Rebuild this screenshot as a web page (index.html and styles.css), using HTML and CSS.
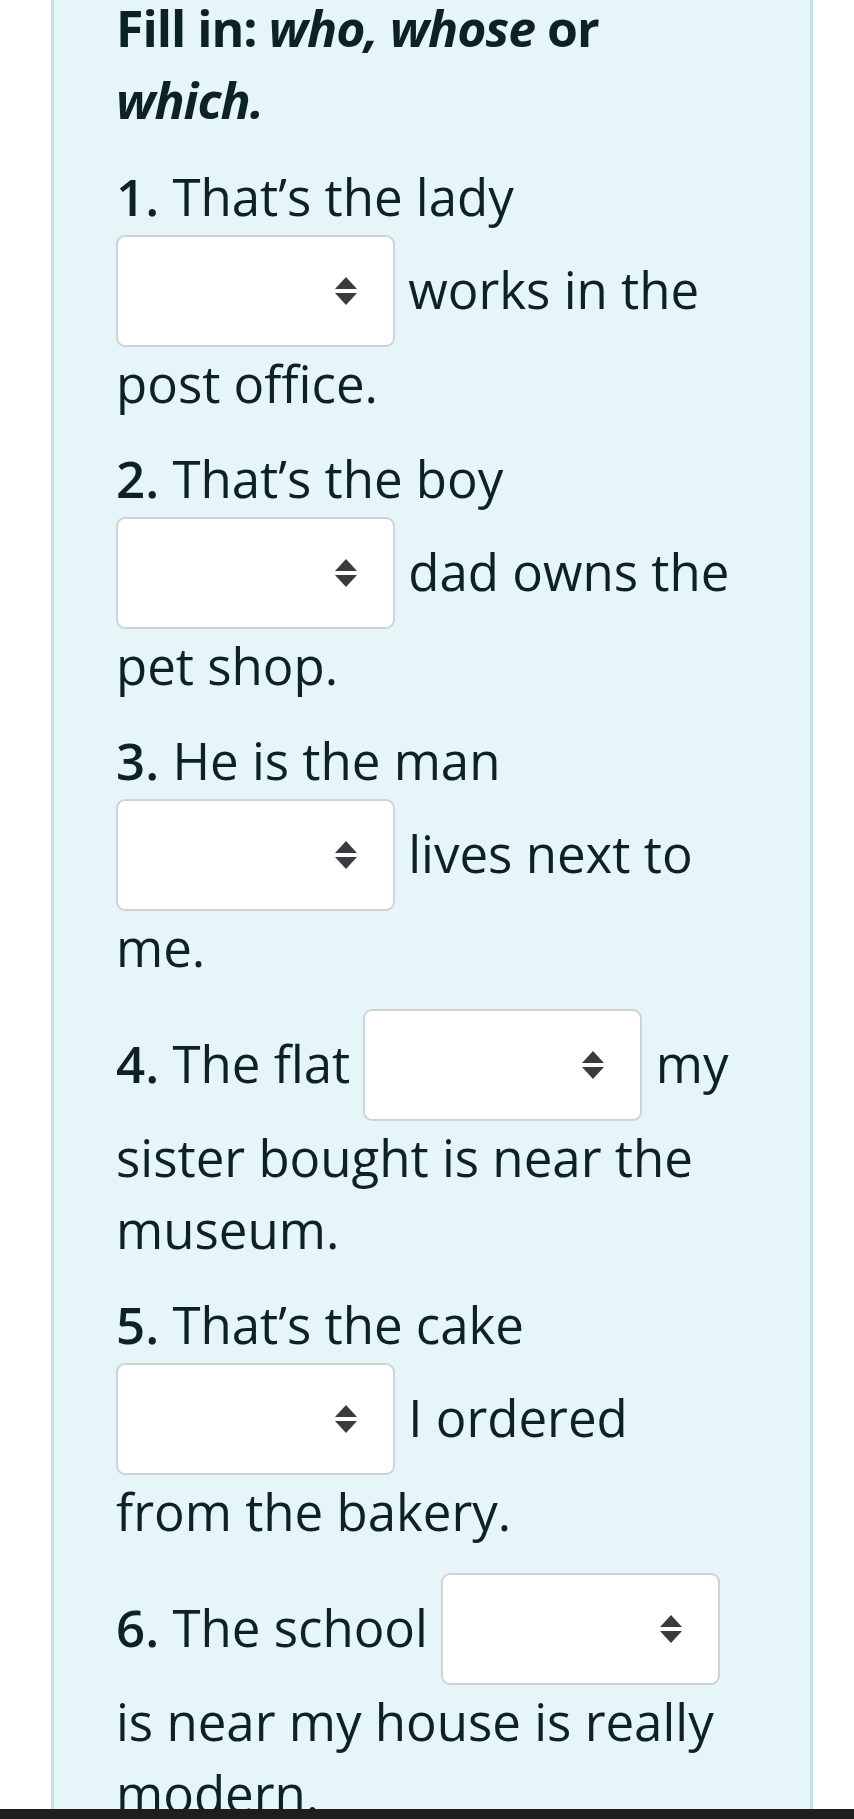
FILE: index.html
```html
<!DOCTYPE html>
<html lang="en">
<head>
<meta charset="utf-8">
<title>Fill in: who, whose or which</title>
<link rel="stylesheet" href="styles.css">
</head>
<body>
<div class="card">
  <h2 class="title">Fill in: <em>who, whose</em> or <em>which.</em></h2>

  <p class="q"><b>1.</b> That’s the lady <span class="pick"><select class="blank" aria-label="blank 1"><option></option><option>who</option><option>whose</option><option>which</option></select><svg class="arrows" viewBox="0 0 22 28" aria-hidden="true"><path d="M11 0 L22 12 L0 12 Z"/><path d="M0 16 L22 16 L11 28 Z"/></svg></span> works in the post office.</p>

  <p class="q"><b>2.</b> That’s the boy <span class="pick"><select class="blank" aria-label="blank 2"><option></option><option>who</option><option>whose</option><option>which</option></select><svg class="arrows" viewBox="0 0 22 28" aria-hidden="true"><path d="M11 0 L22 12 L0 12 Z"/><path d="M0 16 L22 16 L11 28 Z"/></svg></span> dad owns the pet shop.</p>

  <p class="q"><b>3.</b> He is the man <span class="pick"><select class="blank" aria-label="blank 3"><option></option><option>who</option><option>whose</option><option>which</option></select><svg class="arrows" viewBox="0 0 22 28" aria-hidden="true"><path d="M11 0 L22 12 L0 12 Z"/><path d="M0 16 L22 16 L11 28 Z"/></svg></span> lives next to me.</p>

  <p class="q"><b>4.</b> The flat <span class="pick"><select class="blank" aria-label="blank 4"><option></option><option>who</option><option>whose</option><option>which</option></select><svg class="arrows" viewBox="0 0 22 28" aria-hidden="true"><path d="M11 0 L22 12 L0 12 Z"/><path d="M0 16 L22 16 L11 28 Z"/></svg></span> my sister bought is near the museum.</p>

  <p class="q"><b>5.</b> That’s the cake <span class="pick"><select class="blank" aria-label="blank 5"><option></option><option>who</option><option>whose</option><option>which</option></select><svg class="arrows" viewBox="0 0 22 28" aria-hidden="true"><path d="M11 0 L22 12 L0 12 Z"/><path d="M0 16 L22 16 L11 28 Z"/></svg></span> I ordered from the bakery.</p>

  <p class="q"><b>6.</b> The school <span class="pick"><select class="blank" aria-label="blank 6"><option></option><option>who</option><option>whose</option><option>which</option></select><svg class="arrows" viewBox="0 0 22 28" aria-hidden="true"><path d="M11 0 L22 12 L0 12 Z"/><path d="M0 16 L22 16 L11 28 Z"/></svg></span> is near my house is really modern.</p>
</div>
<div class="navbar"></div>
</body>
</html>
```

FILE: styles.css
```css
html, body {
  margin: 0;
  padding: 0;
  background: #ffffff;
  overflow: hidden;
}

body {
  height: 1819px;
  font-family: "Open Sans", "Noto Sans", sans-serif;
  color: #0c2226;
}

.card {
  margin: -8px 41px 0 51px;
  padding: 0 68px 40px 62px;
  background: #e6f5f7;
  border-left: 3px solid #c4e2e6;
  border-right: 3px solid #c4e2e6;
  box-sizing: border-box;
}

.title {
  margin: 0 0 24px 0;
  font-size: 50px;
  line-height: 72px;
  font-weight: 700;
  letter-spacing: -1px;
}

.title em {
  font-style: italic;
}

.q {
  margin: 0 0 23px 0;
  font-size: 51px;
  line-height: 72px;
  font-weight: 400;
}

.q b {
  font-weight: 600;
}

.pick {
  position: relative;
  display: inline-block;
  overflow: hidden;
  vertical-align: -38px;
  margin: 3px 0 0 0;
  width: 279px;
  height: 112px;
}

.blank {
  -webkit-appearance: none;
  appearance: none;
  display: block;
  width: 279px;
  height: 112px;
  box-sizing: border-box;
  margin: 0;
  border: 2px solid #cdd3d6;
  border-radius: 9px;
  background: #ffffff;
  font: inherit;
  color: #0c2226;
  padding: 0 60px 0 20px;
}

.arrows {
  position: absolute;
  right: 38px;
  top: 42px;
  width: 22px;
  height: 28px;
  fill: #3a3b3f;
  pointer-events: none;
}

.navbar {
  position: fixed;
  left: 0;
  right: 0;
  bottom: 0;
  height: 10px;
  background: #1e1e1e;
}
```
